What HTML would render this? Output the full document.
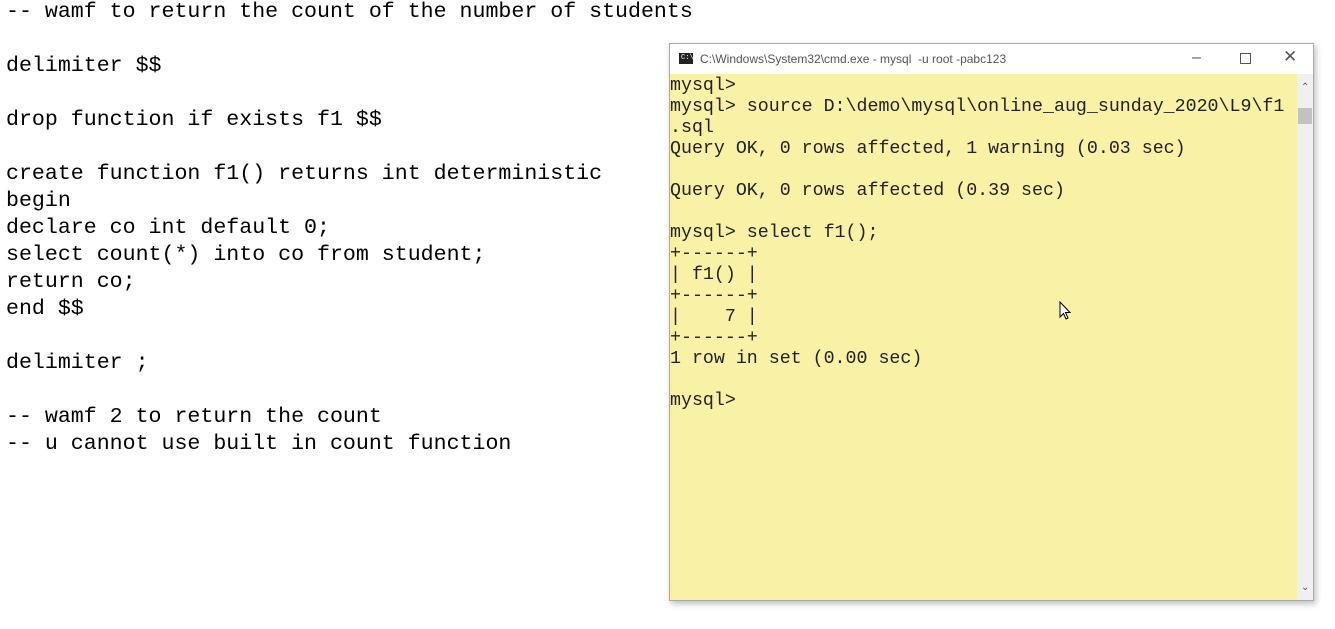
<!DOCTYPE html>
<html><head><style>
body{margin:0;width:1335px;height:629px;background:#fff;position:relative;overflow:hidden}
.ed{position:absolute;left:6px;top:-1px;font:21.6px/27px "Liberation Mono",monospace;color:#000;white-space:pre;margin:0}
.win{position:absolute;left:669px;top:43px;width:643px;height:556px;background:#fff;border:1px solid #aaa;box-shadow:2px 3px 6px rgba(0,0,0,.25)}
.tb{position:absolute;left:0;top:0;width:643px;height:30px;font:12px "Liberation Sans",sans-serif;color:#555}
.con{position:absolute;left:0;top:30px;width:627px;height:526px;background:#f9f1a5}
.con pre{margin:0;position:absolute;left:0;top:2px;font:18.3px/21px "Liberation Mono",monospace;color:#222;white-space:pre}
.sb{position:absolute;left:627px;top:30px;width:16px;height:526px;background:#f0f0f0}
</style></head><body>
<pre class="ed">-- wamf to return the count of the number of students

delimiter $$

drop function if exists f1 $$

create function f1() returns int deterministic
begin
declare co int default 0;
select count(*) into co from student;
return co;
end $$

delimiter ;

-- wamf 2 to return the count
-- u cannot use built in count function</pre>
<div class="win">
 <div class="tb">
  <div style="position:absolute;left:9px;top:9px;width:14px;height:11px;background:#222"><span style="position:absolute;left:2px;top:1px;font:7px 'Liberation Mono';color:#fff">C:\</span></div>
  <span style="position:absolute;left:30px;top:8px">C:\Windows\System32\cmd.exe - mysql&nbsp; -u root -pabc123</span>
  <span style="position:absolute;left:522px;top:5px;font-size:16px">&#8211;</span>
  <div style="position:absolute;left:570px;top:9px;width:9px;height:9px;border:1px solid #555"></div>
  <span style="position:absolute;left:613px;top:3px;font-size:17px">&#10005;</span>
 </div>
 <div class="con"><pre>mysql>
mysql> source D:\demo\mysql\online_aug_sunday_2020\L9\f1
.sql
Query OK, 0 rows affected, 1 warning (0.03 sec)

Query OK, 0 rows affected (0.39 sec)

mysql> select f1();
+------+
| f1() |
+------+
|    7 |
+------+
1 row in set (0.00 sec)

mysql></pre></div>
 <div class="sb">
  <div style="position:absolute;left:4px;top:8px;font:10px 'Liberation Sans';color:#555">&#8963;</div>
  <div style="position:absolute;left:1px;top:34px;width:14px;height:16px;background:#c2c2c2"></div>
  <div style="position:absolute;left:4px;top:508px;font:10px 'Liberation Sans';color:#555">&#8964;</div>
 </div>
</div>
<svg style="position:absolute;left:1059px;top:301px" width="14" height="20"><path d="M1 1 L1 16 L4.5 12.5 L7 18 L9 17 L6.5 11.5 L11 11.5 Z" fill="#fff" stroke="#000" stroke-width="1"/></svg>
</body></html>
